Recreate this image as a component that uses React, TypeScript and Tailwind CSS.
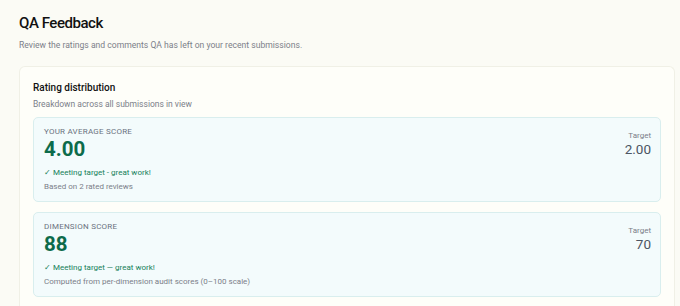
import React from "react";

function ScoreCard({
  label,
  value,
  target,
  note,
  sub,
}: {
  label: string;
  value: string;
  target: string;
  note: string;
  sub: string;
}) {
  return (
    <div className="flex justify-between rounded-[5px] border border-[#d9eeee] bg-[#f3fbfc] pl-[10px] pr-[9px] pb-[8px] pt-[8px]">
      <div className="flex flex-col">
        <div className="text-[8px] uppercase leading-[12px] tracking-[0.03em] text-[#6b7280]">{label}</div>
        <div className="mt-[-1px] text-[20.5px] font-bold leading-[24px] text-[#0d6b4b]">{value}</div>
        <div className="mt-[6px] text-[8px] leading-[12px] text-[#15805a]">{note}</div>
        <div className="mt-[2px] text-[8px] leading-[12px] text-[#7b8089]">{sub}</div>
      </div>
      <div className="flex flex-col items-end pt-[4px]">
        <div className="text-[8px] leading-[11px] text-[#7b8089]">Target</div>
        <div className="text-[13.5px] leading-[16px] text-[#4b5563]">{target}</div>
      </div>
    </div>
  );
}

export default function App() {
  return (
    <div
      className="min-h-[306px] w-[680px] overflow-hidden bg-[#fbfbf5] pl-[19px] pr-[5px] pt-[11px]"
      style={{ fontFamily: "Roboto, 'Noto Sans', sans-serif" }}
    >
      <h1 className="text-[15px] font-medium leading-[24px] tracking-[-0.03em] text-[#111111]">QA Feedback</h1>
      <p className="mt-[4px] text-[8.6px] leading-[12px] text-[#7b8089]">
        Review the ratings and comments QA has left on your recent submissions.
      </p>
      <div className="mt-[15px] rounded-t-[6px] border border-b-0 border-[#f0f0e6] bg-[#fefef9] px-[13px] pb-[12px] pt-[14px]">
        <h2 className="text-[10px] font-medium leading-[14px] text-[#111111]">Rating distribution</h2>
        <p className="mt-[3px] text-[8.5px] leading-[12px] text-[#7b8089]">Breakdown across all submissions in view</p>
        <div className="mt-[7px] flex flex-col gap-[10px]">
          <ScoreCard
            label="Your average score"
            value="4.00"
            target="2.00"
            note="✓ Meeting target - great work!"
            sub="Based on 2 rated reviews"
          />
          <ScoreCard
            label="Dimension score"
            value="88"
            target="70"
            note="✓ Meeting target — great work!"
            sub="Computed from per-dimension audit scores (0–100 scale)"
          />
        </div>
      </div>
    </div>
  );
}
